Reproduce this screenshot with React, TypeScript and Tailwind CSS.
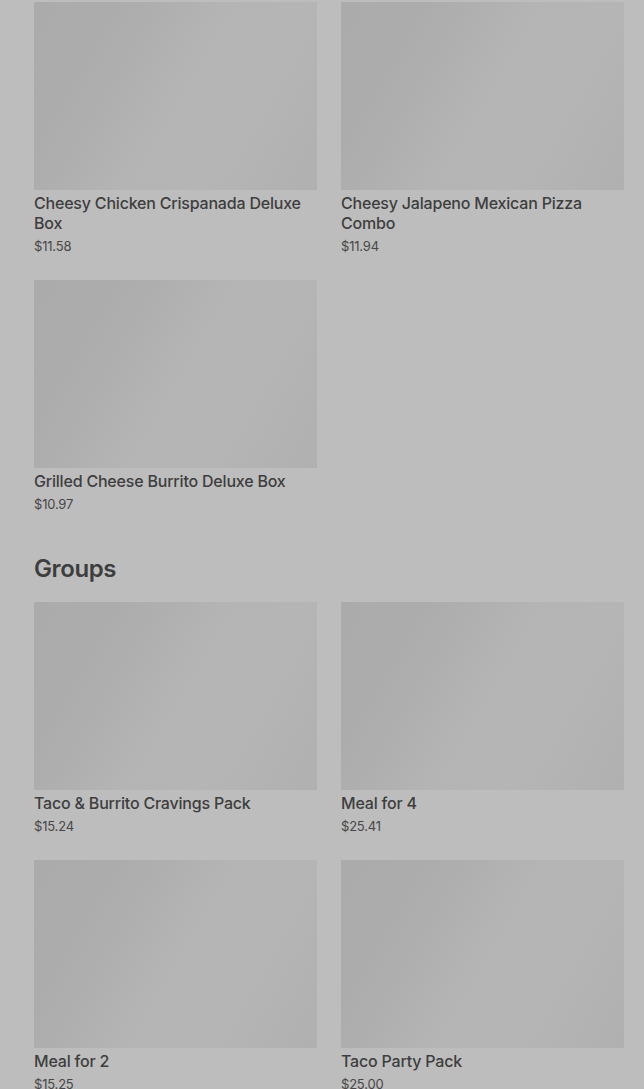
const featured = [
  { name: 'Cheesy Chicken Crispanada Deluxe Box', price: '$11.58' },
  { name: 'Cheesy Jalapeno Mexican Pizza Combo', price: '$11.94' },
  { name: 'Grilled Cheese Burrito Deluxe Box', price: '$10.97' },
];

const groups = [
  { name: 'Taco & Burrito Cravings Pack', price: '$15.24' },
  { name: 'Meal for 4', price: '$25.41' },
  { name: 'Meal for 2', price: '$15.25' },
  { name: 'Taco Party Pack', price: '$25.00' },
];

function ItemCard({ name, price }: { name: string; price: string }) {
  return (
    <div className="flex flex-col">
      <div className="h-[188px] w-full bg-[linear-gradient(120deg,#ababab_0%,#acacac_22%,#b4b4b4_50%,#b5b5b5_70%,#b0b0b0_100%)]" />
      <div className="mt-[3px] text-[16px] leading-5 font-medium tracking-[-0.2px] text-[#3e3e3e]">{name}</div>
      <div className="mt-[3px] text-[13px] leading-5 text-[#474747] tracking-[-0.2px]">{price}</div>
    </div>
  );
}

export default function App() {
  return (
    <div className="min-h-[1089px] bg-[#bdbdbd] pl-[34px] pr-[20px] pt-[2px] font-['Inter',sans-serif] overflow-hidden">
      <div className="grid grid-cols-2 gap-x-6 gap-y-6">
        {featured.map((item) => (
          <ItemCard key={item.name} {...item} />
        ))}
      </div>

      <h2 className="mt-[39px] mb-[17px] text-[24px] leading-8 font-semibold tracking-[-0.4px] text-[#3e3e3e]">
        Groups
      </h2>

      <div className="grid grid-cols-2 gap-x-6 gap-y-6">
        {groups.map((item) => (
          <ItemCard key={item.name} {...item} />
        ))}
      </div>
    </div>
  );
}
